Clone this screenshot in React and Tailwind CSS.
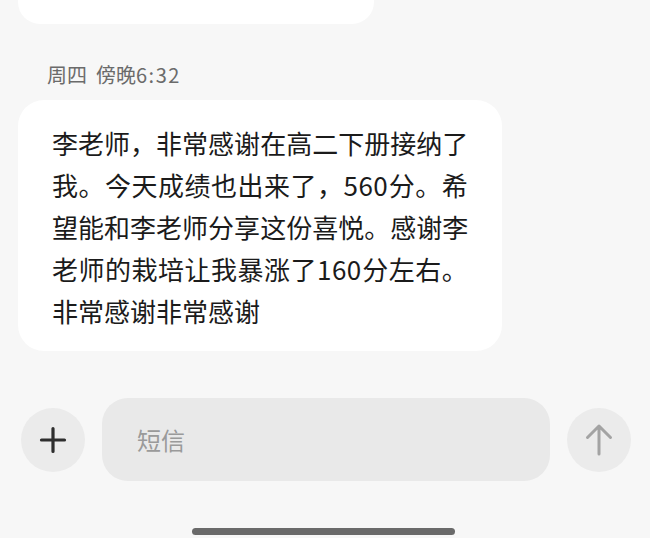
function tokenize(s) {
  const out = [];
  let buf = "";
  for (const ch of s) {
    if (/[0-9]/.test(ch)) {
      buf += ch;
    } else {
      if (buf) { out.push(buf); buf = ""; }
      out.push(ch);
    }
  }
  if (buf) out.push(buf);
  return out;
}

export default function App() {
  const font = { fontFamily: '"Noto Sans CJK SC", "Noto Sans", sans-serif' };
  const lines = [
    "李老师，非常感谢在高二下册接纳了",
    "我。今天成绩也出来了，560分。希",
    "望能和李老师分享这份喜悦。感谢李",
    "老师的栽培让我暴涨了160分左右。",
  ];
  return (
    <div className="w-[650px] h-[538px] bg-[#f7f7f7] overflow-hidden flex flex-col" style={font}>
      <div className="ml-[18px] w-[356px] h-[24px] bg-white rounded-b-[22px]" />
      <div className="mt-[37px] ml-[47px] text-[20px] leading-[28px] text-[#6b6b6b] whitespace-nowrap">
        周四<span className="ml-[9px]">傍晚</span><span className="tracking-[1.5px]">6:32</span>
      </div>
      <div className="mt-[11px] ml-[18px] w-[484px] bg-white rounded-[26px] px-[34px] pt-[22px] pb-[19px] text-[26px] leading-[42px] text-[#1b1b1b]">
        {lines.map((l) => (
          <div key={l} className="flex justify-between whitespace-nowrap">
            {tokenize(l).map((t, i) => (
              <span key={i} className={/[0-9]/.test(t) ? "tracking-[0.5px]" : ""}>{t}</span>
            ))}
          </div>
        ))}
        <div className="whitespace-nowrap">非常感谢非常感谢</div>
      </div>
      <div className="mt-[47px] flex items-center">
        <div className="ml-[21px] w-[64px] h-[64px] rounded-full bg-[#ebebeb] flex items-center justify-center">
          <svg width="28" height="28" viewBox="0 0 28 28">
            <path d="M14 2.5V25.5M2.5 14H25.5" stroke="#2e2e2e" strokeWidth="3.2" strokeLinecap="round" />
          </svg>
        </div>
        <div className="ml-[17px] w-[448px] h-[83px] rounded-[26px] bg-[#e9e9e9] flex items-center pl-[35px] text-[24px] text-[#9a9a9a]">
          短信
        </div>
        <div className="ml-[17px] w-[64px] h-[64px] rounded-full bg-[#ebebeb] flex items-center justify-center">
          <svg width="30" height="34" viewBox="0 0 30 34">
            <path d="M15 31V3M3.5 14.5L15 3L26.5 14.5" stroke="#a3a3a3" strokeWidth="3" strokeLinecap="round" strokeLinejoin="round" fill="none" />
          </svg>
        </div>
      </div>
      <div className="mt-[47px] ml-[192px] w-[263px] h-[7px] rounded-full bg-[#6a6a6a]" />
    </div>
  );
}
